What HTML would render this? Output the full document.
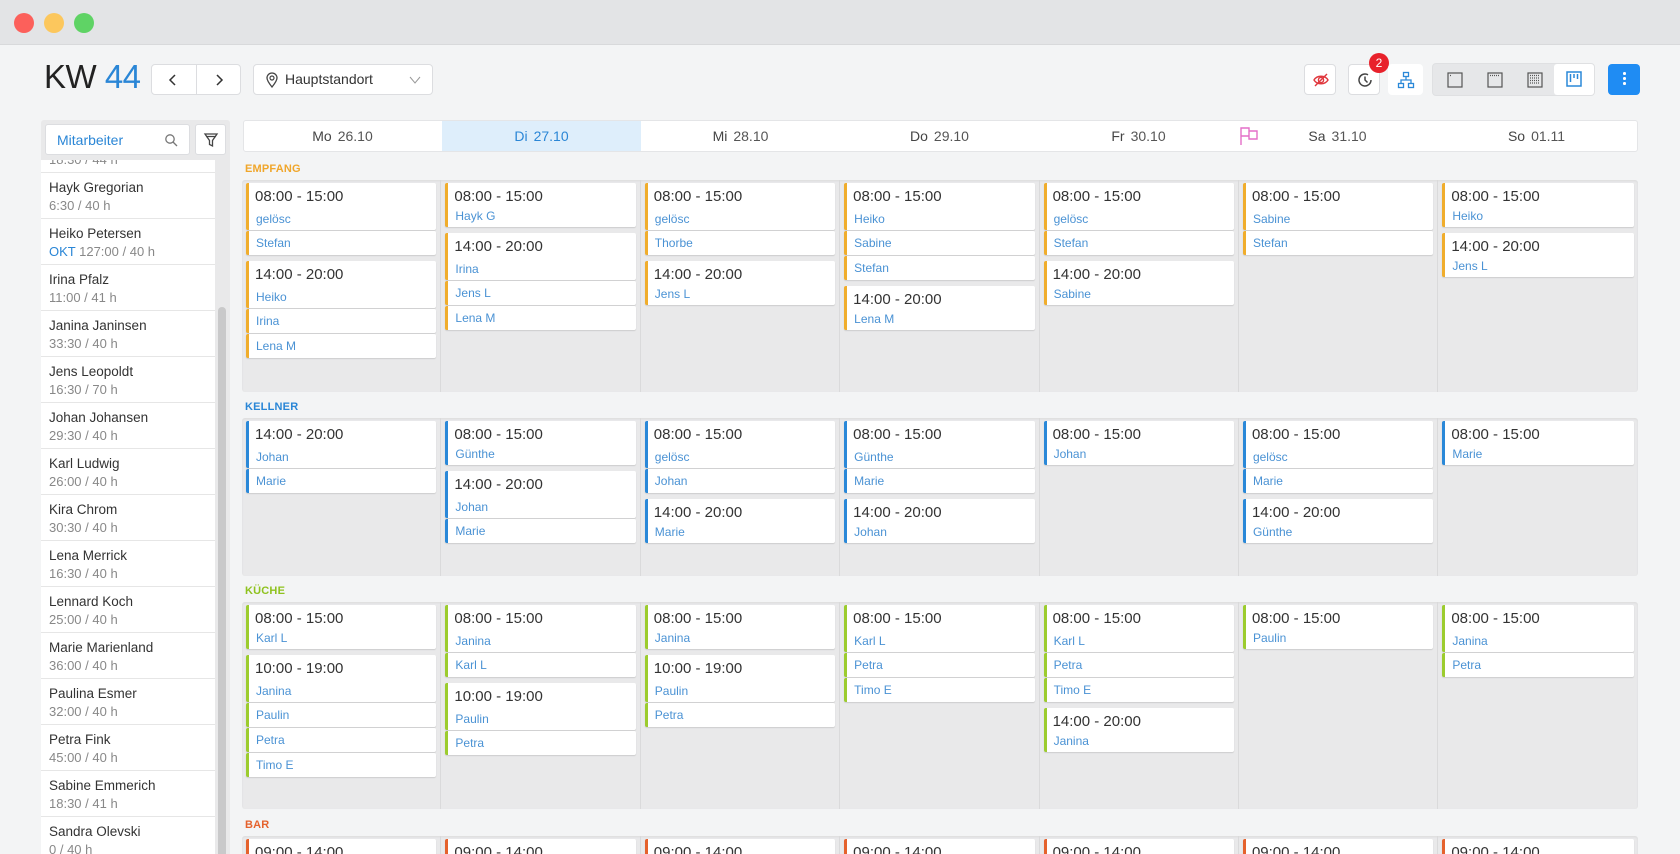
<!DOCTYPE html>
<html style="width:1680px;height:854px;overflow:hidden"><head><meta charset="utf-8"><style>
*{box-sizing:border-box;margin:0;padding:0}
body{width:1680px;height:854px;overflow:hidden;background:#f3f4f5;font-family:"Liberation Sans","DejaVu Sans",sans-serif;position:relative;color:#333}
.tb{position:absolute;left:0;top:0;width:1680px;height:45px;background:#e3e4e6;border-bottom:1px solid #d8d9db}
.dot{position:absolute;top:13px;width:20px;height:20px;border-radius:50%}
.abs{position:absolute}
.btn{position:absolute;top:64px;height:31px;background:#fff;border:1px solid #dcdde0;border-radius:4px}
.day{position:absolute;top:120px;height:32px;width:199px;text-align:center;line-height:32px;font-size:14px;color:#555}
.day b{font-weight:normal;color:#444;margin-right:6px}
.lbl{position:absolute;left:245px;font-size:11px;font-weight:bold;letter-spacing:.2px}
.grp{position:absolute;left:242px;width:1396px;background:#e9e9ea;border-radius:3px;display:flex;overflow:hidden;box-shadow:inset 0 1px 2px rgba(0,0,0,.06)}
.col{width:199.4px;border-right:1px solid #dadadb;padding:3px 4px 0 4px}
.col:last-child{border-right:none}
.sh{margin-bottom:6px}
.h,.r{background:#fff;border-left:3px solid var(--c);border-radius:2px;box-shadow:0 1px 1px rgba(0,0,0,.12);margin-bottom:1px;padding-left:6px}
.h{height:47px;padding-top:4px}
.h.s{height:44px}
.h .t{font-size:15px;color:#333;line-height:20px}
.h .n{font-size:12px;color:#4a92d4;margin-top:5px;padding-left:1px}
.h.s .n{margin-top:2px}
.r{height:24px;line-height:24px;font-size:12px;color:#4a92d4;padding-left:7px}
.e{--c:#f0ad2c}.k{--c:#2a88d8}.ku{--c:#9ccc2e}.b{--c:#e5622d}
.li{height:46px;border-bottom:1px solid #e6e6e6;padding:6px 0 0 8px;background:#fff}
.li .nm{font-size:13.5px;color:#333;line-height:17px}
.li .hr{font-size:13px;color:#888;line-height:19px}
</style></head><body>
<div class="tb"></div>
<div class="dot" style="left:14px;background:#fc605b"></div>
<div class="dot" style="left:44px;background:#fcc75d"></div>
<div class="dot" style="left:74px;background:#5fd365"></div>

<div class="abs" style="left:44px;top:58px;font-size:33px;color:#222;letter-spacing:-.5px">KW <span style="color:#2a86d6">44</span></div>
<div class="btn" style="left:151px;width:90px"><div class="abs" style="left:44px;top:0;width:1px;height:29px;background:#dcdde0"></div>
<svg class="abs" style="left:14px;top:8px" width="14" height="14" viewBox="0 0 14 14"><path d="M9 2 L4 7 L9 12" fill="none" stroke="#333" stroke-width="1.5"/></svg>
<svg class="abs" style="left:60px;top:8px" width="14" height="14" viewBox="0 0 14 14"><path d="M5 2 L10 7 L5 12" fill="none" stroke="#333" stroke-width="1.5"/></svg></div>
<div class="btn" style="left:253px;width:180px">
<svg class="abs" style="left:11px;top:7px" width="14" height="16" viewBox="0 0 14 16"><path d="M7 15 C3 10 2 8 2 6 A5 5 0 0 1 12 6 C12 8 11 10 7 15Z" fill="none" stroke="#444" stroke-width="1.3"/><circle cx="7" cy="6" r="2" fill="none" stroke="#444" stroke-width="1.2"/></svg>
<span class="abs" style="left:31px;top:6px;font-size:14px;color:#333">Hauptstandort</span>
<svg class="abs" style="left:155px;top:10px" width="12" height="10" viewBox="0 0 12 10"><path d="M1 2 L6 8 L11 2" fill="none" stroke="#999" stroke-width="1"/></svg></div>

<div class="btn" style="left:1304px;width:32px"><svg class="abs" style="left:7px;top:6px" width="18" height="18" viewBox="0 0 18 18"><path d="M2 9 C5 4 13 4 16 9 C13 14 5 14 2 9Z" fill="none" stroke="#e0383e" stroke-width="1.4"/><circle cx="9" cy="9" r="2.6" fill="none" stroke="#e0383e" stroke-width="1.4"/><path d="M3 15 L15 3" stroke="#e0383e" stroke-width="1.4"/></svg></div>
<div class="btn" style="left:1348px;width:32px"><svg class="abs" style="left:7px;top:6px" width="18" height="18" viewBox="0 0 18 18"><path d="M15 9 A6 6 0 1 1 12 3.8" fill="none" stroke="#444" stroke-width="1.5"/><path d="M9 5.5 V9 L11.5 11.5" fill="none" stroke="#444" stroke-width="1.5"/></svg></div>
<div class="abs" style="left:1369px;top:53px;width:20px;height:20px;border-radius:50%;background:#e8212b;color:#fff;font-size:12px;text-align:center;line-height:20px">2</div>
<div class="btn" style="left:1388px;width:35px;border-color:#fff"><svg class="abs" style="left:8px;top:6px" width="18" height="18" viewBox="0 0 18 18" fill="none" stroke="#2a88d8" stroke-width="1.3"><rect x="6.5" y="1.5" width="5" height="4"/><rect x="1.5" y="12.5" width="5" height="4"/><rect x="11.5" y="12.5" width="5" height="4"/><path d="M9 5.5 V9 M4 12.5 V9 H14 V12.5"/></svg></div>
<div class="abs" style="left:1432px;top:63px;width:163px;height:33px;background:#e6e7e9;border-radius:4px;border:1px solid #dfe0e2">
<svg class="abs" style="left:13px;top:7px" width="18" height="18" viewBox="0 0 18 18" fill="none" stroke="#555" stroke-width="1.2"><rect x="2" y="2" width="14" height="14"/><path d="M4 4.5h1"/></svg>
<svg class="abs" style="left:53px;top:7px" width="18" height="18" viewBox="0 0 18 18" fill="none" stroke="#555" stroke-width="1.2"><rect x="2" y="2" width="14" height="14"/><path d="M4 4.5h10" stroke-dasharray="1 1"/></svg>
<svg class="abs" style="left:93px;top:7px" width="18" height="18" viewBox="0 0 18 18" fill="none" stroke="#555" stroke-width="1.2"><rect x="2" y="2" width="14" height="14"/><path d="M4 4.5h10M4 7h10M4 9.5h10M4 12h10" stroke-dasharray="1 1"/></svg>
<div class="abs" style="left:121px;top:0;width:40px;height:31px;background:#fff;border-radius:3px"><svg class="abs" style="left:11px;top:6px" width="18" height="18" viewBox="0 0 18 18" fill="none" stroke="#2a88d8" stroke-width="1.5"><rect x="2" y="2" width="14" height="14"/><path d="M5.5 4v8M9 4v4M12.5 4v5"/></svg></div></div>
<div class="abs" style="left:1608px;top:64px;width:32px;height:31px;background:#1f8cf3;border-radius:4px"><div class="abs" style="left:15px;top:8px;width:2.5px;height:2.5px;background:#fff;border-radius:50%;box-shadow:0 5px 0 #fff,0 10px 0 #fff"></div></div>

<!-- sidebar -->
<div class="abs" style="left:41px;top:120px;width:189px;height:734px;background:#e9e9ea;border-radius:3px 3px 0 0"></div>
<div class="abs" style="left:45px;top:124px;width:145px;height:31px;background:#fff;border:1px solid #dcdde0;border-radius:3px"><span class="abs" style="left:11px;top:7px;font-size:14px;color:#2a86d6">Mitarbeiter</span>
<svg class="abs" style="left:118px;top:8px" width="14" height="14" viewBox="0 0 14 14" fill="none" stroke="#777" stroke-width="1.3"><circle cx="6" cy="6" r="4.2"/><path d="M9 9 L13 13"/></svg></div>
<div class="abs" style="left:195px;top:124px;width:31px;height:31px;background:#fff;border:1px solid #dcdde0;border-radius:3px"><svg class="abs" style="left:7px;top:7px" width="16" height="16" viewBox="0 0 16 16" fill="none" stroke="#444" stroke-width="1.3"><path d="M2 2 H14 L9.5 8.5 V14 L6.5 12.5 V8.5Z M3 4.5 H13"/></svg></div>
<div class="abs" style="left:41px;top:160px;width:174px;height:694px;overflow:hidden;background:#fff">
<div style="margin-top:-33.5px">
<div class="li"><div class="nm">Hanna Hermann</div><div class="hr">18:30 / 44 h</div></div>
<div class="li"><div class="nm">Hayk Gregorian</div><div class="hr">6:30 / 40 h</div></div>
<div class="li"><div class="nm">Heiko Petersen</div><div class="hr"><span style="color:#2a86d6">OKT</span> 127:00 / 40 h</div></div>
<div class="li"><div class="nm">Irina Pfalz</div><div class="hr">11:00 / 41 h</div></div>
<div class="li"><div class="nm">Janina Janinsen</div><div class="hr">33:30 / 40 h</div></div>
<div class="li"><div class="nm">Jens Leopoldt</div><div class="hr">16:30 / 70 h</div></div>
<div class="li"><div class="nm">Johan Johansen</div><div class="hr">29:30 / 40 h</div></div>
<div class="li"><div class="nm">Karl Ludwig</div><div class="hr">26:00 / 40 h</div></div>
<div class="li"><div class="nm">Kira Chrom</div><div class="hr">30:30 / 40 h</div></div>
<div class="li"><div class="nm">Lena Merrick</div><div class="hr">16:30 / 40 h</div></div>
<div class="li"><div class="nm">Lennard Koch</div><div class="hr">25:00 / 40 h</div></div>
<div class="li"><div class="nm">Marie Marienland</div><div class="hr">36:00 / 40 h</div></div>
<div class="li"><div class="nm">Paulina Esmer</div><div class="hr">32:00 / 40 h</div></div>
<div class="li"><div class="nm">Petra Fink</div><div class="hr">45:00 / 40 h</div></div>
<div class="li"><div class="nm">Sabine Emmerich</div><div class="hr">18:30 / 41 h</div></div>
<div class="li"><div class="nm">Sandra Olevski</div><div class="hr">0 / 40 h</div></div>
</div></div>
<div class="abs" style="left:218px;top:307px;width:8px;height:547px;background:#c9c9ca;border-radius:4px 4px 0 0"></div>

<!-- day header -->
<div class="abs" style="left:243px;top:120px;width:1395px;height:32px;background:#fff;border:1px solid #e4e5e7;border-radius:3px"></div>
<div class="abs" style="left:442px;top:121px;width:199px;height:30px;background:#deeefb"></div>
<div class="day" style="left:243px"><b>Mo</b>26.10</div>
<div class="day" style="left:442px;color:#2a86d6"><b style="color:#2a86d6">Di</b>27.10</div>
<div class="day" style="left:641px"><b>Mi</b>28.10</div>
<div class="day" style="left:840px"><b>Do</b>29.10</div>
<div class="day" style="left:1039px"><b>Fr</b>30.10</div>
<div class="day" style="left:1238px"><b>Sa</b>31.10</div>
<div class="day" style="left:1437px"><b>So</b>01.11</div>
<svg class="abs" style="left:1239px;top:126px" width="20" height="20" viewBox="0 0 20 20" fill="none" stroke="#e46fc8" stroke-width="1.4"><path d="M2 19 V2 H10 V5 H18 V13 H10 V10 H2 M10 5 V10"/></svg>

<!-- EMPFANG -->
<div class="lbl" style="top:163px;color:#f0a62b">EMPFANG</div>
<div class="grp e" style="top:180px;height:212px">
<div class="col"><div class="sh"><div class="h"><div class="t">08:00 - 15:00</div><div class="n">gelösc</div></div><div class="r">Stefan</div></div><div class="sh"><div class="h"><div class="t">14:00 - 20:00</div><div class="n">Heiko</div></div><div class="r">Irina</div><div class="r">Lena M</div></div></div>
<div class="col"><div class="sh"><div class="h s"><div class="t">08:00 - 15:00</div><div class="n">Hayk G</div></div></div><div class="sh"><div class="h"><div class="t">14:00 - 20:00</div><div class="n">Irina</div></div><div class="r">Jens L</div><div class="r">Lena M</div></div></div>
<div class="col"><div class="sh"><div class="h"><div class="t">08:00 - 15:00</div><div class="n">gelösc</div></div><div class="r">Thorbe</div></div><div class="sh"><div class="h s"><div class="t">14:00 - 20:00</div><div class="n">Jens L</div></div></div></div>
<div class="col"><div class="sh"><div class="h"><div class="t">08:00 - 15:00</div><div class="n">Heiko</div></div><div class="r">Sabine</div><div class="r">Stefan</div></div><div class="sh"><div class="h s"><div class="t">14:00 - 20:00</div><div class="n">Lena M</div></div></div></div>
<div class="col"><div class="sh"><div class="h"><div class="t">08:00 - 15:00</div><div class="n">gelösc</div></div><div class="r">Stefan</div></div><div class="sh"><div class="h s"><div class="t">14:00 - 20:00</div><div class="n">Sabine</div></div></div></div>
<div class="col"><div class="sh"><div class="h"><div class="t">08:00 - 15:00</div><div class="n">Sabine</div></div><div class="r">Stefan</div></div></div>
<div class="col"><div class="sh"><div class="h s"><div class="t">08:00 - 15:00</div><div class="n">Heiko</div></div></div><div class="sh"><div class="h s"><div class="t">14:00 - 20:00</div><div class="n">Jens L</div></div></div></div>
</div>

<!-- KELLNER -->
<div class="lbl" style="top:401px;color:#2a86d6">KELLNER</div>
<div class="grp k" style="top:418px;height:158px">
<div class="col"><div class="sh"><div class="h"><div class="t">14:00 - 20:00</div><div class="n">Johan</div></div><div class="r">Marie</div></div></div>
<div class="col"><div class="sh"><div class="h s"><div class="t">08:00 - 15:00</div><div class="n">Günthe</div></div></div><div class="sh"><div class="h"><div class="t">14:00 - 20:00</div><div class="n">Johan</div></div><div class="r">Marie</div></div></div>
<div class="col"><div class="sh"><div class="h"><div class="t">08:00 - 15:00</div><div class="n">gelösc</div></div><div class="r">Johan</div></div><div class="sh"><div class="h s"><div class="t">14:00 - 20:00</div><div class="n">Marie</div></div></div></div>
<div class="col"><div class="sh"><div class="h"><div class="t">08:00 - 15:00</div><div class="n">Günthe</div></div><div class="r">Marie</div></div><div class="sh"><div class="h s"><div class="t">14:00 - 20:00</div><div class="n">Johan</div></div></div></div>
<div class="col"><div class="sh"><div class="h s"><div class="t">08:00 - 15:00</div><div class="n">Johan</div></div></div></div>
<div class="col"><div class="sh"><div class="h"><div class="t">08:00 - 15:00</div><div class="n">gelösc</div></div><div class="r">Marie</div></div><div class="sh"><div class="h s"><div class="t">14:00 - 20:00</div><div class="n">Günthe</div></div></div></div>
<div class="col"><div class="sh"><div class="h s"><div class="t">08:00 - 15:00</div><div class="n">Marie</div></div></div></div>
</div>

<!-- KÜCHE -->
<div class="lbl" style="top:585px;color:#8fc21f">KÜCHE</div>
<div class="grp ku" style="top:602px;height:207px">
<div class="col"><div class="sh"><div class="h s"><div class="t">08:00 - 15:00</div><div class="n">Karl L</div></div></div><div class="sh"><div class="h"><div class="t">10:00 - 19:00</div><div class="n">Janina</div></div><div class="r">Paulin</div><div class="r">Petra</div><div class="r">Timo E</div></div></div>
<div class="col"><div class="sh"><div class="h"><div class="t">08:00 - 15:00</div><div class="n">Janina</div></div><div class="r">Karl L</div></div><div class="sh"><div class="h"><div class="t">10:00 - 19:00</div><div class="n">Paulin</div></div><div class="r">Petra</div></div></div>
<div class="col"><div class="sh"><div class="h s"><div class="t">08:00 - 15:00</div><div class="n">Janina</div></div></div><div class="sh"><div class="h"><div class="t">10:00 - 19:00</div><div class="n">Paulin</div></div><div class="r">Petra</div></div></div>
<div class="col"><div class="sh"><div class="h"><div class="t">08:00 - 15:00</div><div class="n">Karl L</div></div><div class="r">Petra</div><div class="r">Timo E</div></div></div>
<div class="col"><div class="sh"><div class="h"><div class="t">08:00 - 15:00</div><div class="n">Karl L</div></div><div class="r">Petra</div><div class="r">Timo E</div></div><div class="sh"><div class="h s"><div class="t">14:00 - 20:00</div><div class="n">Janina</div></div></div></div>
<div class="col"><div class="sh"><div class="h s"><div class="t">08:00 - 15:00</div><div class="n">Paulin</div></div></div></div>
<div class="col"><div class="sh"><div class="h"><div class="t">08:00 - 15:00</div><div class="n">Janina</div></div><div class="r">Petra</div></div></div>
</div>

<!-- BAR -->
<div class="lbl" style="top:819px;color:#e5622d">BAR</div>
<div class="grp b" style="top:836px;height:18px;border-radius:3px 3px 0 0">
<div class="col"><div class="h s"><div class="t">09:00 - 14:00</div></div></div>
<div class="col"><div class="h s"><div class="t">09:00 - 14:00</div></div></div>
<div class="col"><div class="h s"><div class="t">09:00 - 14:00</div></div></div>
<div class="col"><div class="h s"><div class="t">09:00 - 14:00</div></div></div>
<div class="col"><div class="h s"><div class="t">09:00 - 14:00</div></div></div>
<div class="col"><div class="h s"><div class="t">09:00 - 14:00</div></div></div>
<div class="col"><div class="h s"><div class="t">09:00 - 14:00</div></div></div>
</div>
</body></html>
